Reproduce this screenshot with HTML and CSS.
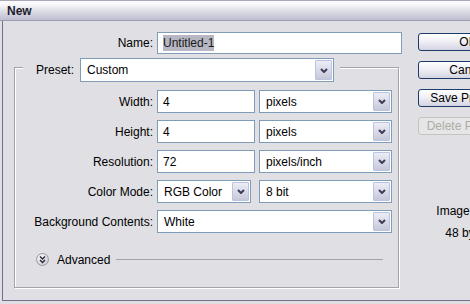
FILE: index.html
```html
<!DOCTYPE html>
<html lang="en">
<head>
    <meta charset="UTF-8">
    <title>New</title>
    <link rel="stylesheet" href="styles.css">
</head>
<body>
    <div class="titlebar">New</div>
    <div class="window">
        <div class="main">
            <div class="row name-row">
                <span class="label">Name:</span>
                <div class="input name-input"><span class="selected">Untitled-1</span></div>
            </div>

            <div class="group">
                <div class="preset-row">
                    <span class="preset-label">Preset:</span>
                    <div class="select preset-select">
                        <span class="value">Custom</span>
                        <span class="drop"><svg width="8" height="5" viewBox="0 0 8 5"><polyline points="1,1 4,4 7,1" fill="none" stroke="#3c3c58" stroke-width="2"/></svg></span>
                    </div>
                </div>

                <div class="row field">
                    <span class="label">Width:</span>
                    <div class="input size-input">4</div>
                    <div class="select unit-select">
                        <span class="value">pixels</span>
                        <span class="drop"><svg width="8" height="5" viewBox="0 0 8 5"><polyline points="1,1 4,4 7,1" fill="none" stroke="#3c3c58" stroke-width="2"/></svg></span>
                    </div>
                </div>
                <div class="row field">
                    <span class="label">Height:</span>
                    <div class="input size-input">4</div>
                    <div class="select unit-select">
                        <span class="value">pixels</span>
                        <span class="drop"><svg width="8" height="5" viewBox="0 0 8 5"><polyline points="1,1 4,4 7,1" fill="none" stroke="#3c3c58" stroke-width="2"/></svg></span>
                    </div>
                </div>
                <div class="row field">
                    <span class="label">Resolution:</span>
                    <div class="input size-input">72</div>
                    <div class="select unit-select">
                        <span class="value">pixels/inch</span>
                        <span class="drop"><svg width="8" height="5" viewBox="0 0 8 5"><polyline points="1,1 4,4 7,1" fill="none" stroke="#3c3c58" stroke-width="2"/></svg></span>
                    </div>
                </div>
                <div class="row field">
                    <span class="label">Color Mode:</span>
                    <div class="select mode-select">
                        <span class="value">RGB Color</span>
                        <span class="drop"><svg width="8" height="5" viewBox="0 0 8 5"><polyline points="1,1 4,4 7,1" fill="none" stroke="#3c3c58" stroke-width="2"/></svg></span>
                    </div>
                    <div class="select unit-select bit-select">
                        <span class="value">8 bit</span>
                        <span class="drop"><svg width="8" height="5" viewBox="0 0 8 5"><polyline points="1,1 4,4 7,1" fill="none" stroke="#3c3c58" stroke-width="2"/></svg></span>
                    </div>
                </div>
                <div class="row field">
                    <span class="label">Background Contents:</span>
                    <div class="select bg-select">
                        <span class="value">White</span>
                        <span class="drop"><svg width="8" height="5" viewBox="0 0 8 5"><polyline points="1,1 4,4 7,1" fill="none" stroke="#3c3c58" stroke-width="2"/></svg></span>
                    </div>
                </div>

                <div class="advanced">
                    <svg class="adv-icon" width="13" height="13" viewBox="0 0 13 13">
                        <defs>
                            <radialGradient id="knob" cx="40%" cy="35%" r="70%">
                                <stop offset="0" stop-color="#ffffff"/>
                                <stop offset="1" stop-color="#c8c8d0"/>
                            </radialGradient>
                        </defs>
                        <circle cx="6.5" cy="6.5" r="6" fill="url(#knob)" stroke="#9a9aa4"/>
                        <polyline points="4,3.5 6.5,6 9,3.5" fill="none" stroke="#2a2a3a" stroke-width="1.5"/>
                        <polyline points="4,7 6.5,9.5 9,7" fill="none" stroke="#2a2a3a" stroke-width="1.5"/>
                    </svg>
                    <span class="adv-text">Advanced</span>
                    <span class="adv-line"></span>
                </div>
            </div>
        </div>

        <div class="side">
            <button class="button">OK</button>
            <button class="button">Cancel</button>
            <button class="button">Save Preset...</button>
            <button class="button disabled">Delete Preset...</button>
            <div class="info">
                <div class="info-title">Image Size:</div>
                <div class="info-value">48 bytes</div>
            </div>
        </div>
    </div>
</body>
</html>
```

FILE: styles.css
```css
body {
    margin: 0;
    width: 470px;
    height: 304px;
    overflow: hidden;
    background-color: #dfdfe4;
    font-family: "Liberation Sans", Arial, sans-serif;
    font-size: 12px;
    color: #000;
}

.titlebar {
    height: 19px;
    line-height: 20px;
    padding-left: 7px;
    font-weight: bold;
    color: #1c1c2c;
    border-top: 1px solid #a9a9bb;
    border-bottom: 1px solid #9c9cb2;
    background: linear-gradient(#fafafc 15%, #dcdce6 55%, #bdbdd0);
}

.window {
    margin-left: 2px;
    height: 279px;
    display: flex;
    border-left: 1px solid #6f6f8f;
    border-bottom: 1px solid #6f6f8f;
}

.main {
    width: 399px;
    flex-shrink: 0;
    padding-top: 11px;
}

.row {
    display: flex;
    align-items: center;
    gap: 4px;
}

.label {
    text-align: right;
    white-space: nowrap;
}

.name-row .label {
    width: 150px;
}

.input {
    box-sizing: border-box;
    height: 23px;
    border: 1px solid #7f9db9;
    background: #fff;
    padding-left: 5px;
    display: flex;
    align-items: center;
}

.name-input {
    width: 245px;
    height: 22px;
}

.selected {
    background: #b6b7c3;
    color: #1a1a1a;
    padding: 1px 0;
}

.group {
    margin: 13px 0 0 11px;
    box-sizing: border-box;
    width: 385px;
    height: 221px;
    border: 1px solid #a3a3aa;
    box-shadow: 1px 1px 0 #fff, inset 1px 1px 0 #fff;
}

.preset-row {
    display: flex;
    align-items: center;
    width: fit-content;
    margin: -10px 0 0 8px;
    padding: 0 6px 0 13px;
    background-color: #dfdfe4;
}

.preset-label {
    width: 39px;
    margin-right: 5px;
}

.select {
    box-sizing: border-box;
    height: 23px;
    display: flex;
    border: 1px solid #7f9db9;
    background: #fff;
    padding: 1px;
}

.select .value {
    flex: 1;
    padding-left: 5px;
    display: flex;
    align-items: center;
    white-space: nowrap;
}

.drop {
    width: 15px;
    border: 1px solid #b9c4e2;
    border-radius: 1px;
    background: linear-gradient(#ecedf5, #c6c8da);
    display: flex;
    align-items: center;
    justify-content: center;
}

.preset-select {
    width: 254px;
    height: 24px;
}

.field {
    margin-top: 7px;
}

.preset-row + .field {
    margin-top: 8px;
}

.field .label {
    width: 138px;
}

.size-input {
    width: 98px;
}

.unit-select {
    width: 133px;
}

.mode-select {
    width: 94px;
}

.bit-select {
    margin-left: 4px;
}

.bg-select {
    width: 235px;
}

.advanced {
    display: flex;
    align-items: center;
    margin: 20px 15px 0 21px;
    height: 13px;
}

.adv-icon {
    display: block;
    margin-right: 8px;
}

.adv-line {
    flex: 1;
    height: 1px;
    margin-left: 6px;
    background: #a3a3aa;
}

.side {
    padding: 12px 0 0 16px;
    display: flex;
    flex-direction: column;
    gap: 10px;
}

.button {
    width: 100px;
    height: 18px;
    padding: 0;
    flex-shrink: 0;
    font-family: "Liberation Sans", Arial, sans-serif;
    font-size: 12px;
    color: #000;
    border: 1px solid #1c3a6a;
    border-radius: 3px;
    background: linear-gradient(#ffffff, #f0f0f6 45%, #d4d3e2);
}

.button.disabled {
    color: #aeada4;
    border-color: #c5c4bc;
    background: #e6e5e8;
}

.info {
    margin-top: 59px;
    width: 100px;
    text-align: center;
}

.info-title {
    line-height: 14px;
}

.info-value {
    margin-top: 8px;
    line-height: 14px;
}
```
